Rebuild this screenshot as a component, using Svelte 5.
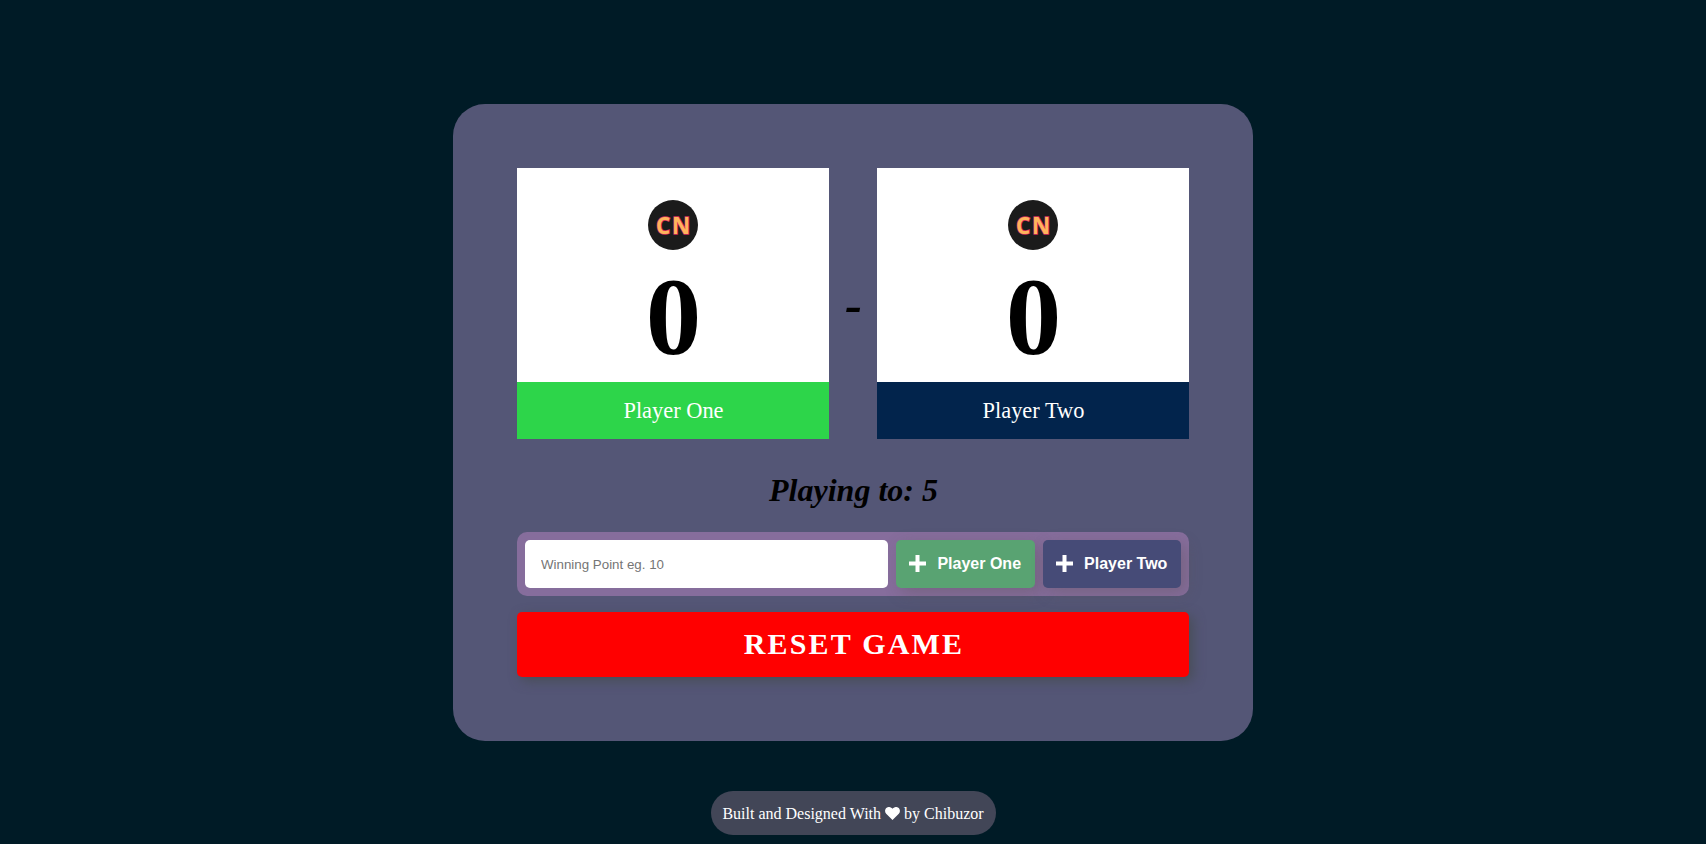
<script>
  let scores = $state([0, 0]);
  let target = $state(5);
  let entry = $state('');
  const players = [
    { name: 'Player One', tone: 'one' },
    { name: 'Player Two', tone: 'two' }
  ];
  function add(i) {
    if (Math.max(...scores) < target) scores[i] += 1;
  }
  function change() {
    const n = parseInt(entry, 10);
    if (n > 0) target = n;
  }
  function reset() {
    scores = [0, 0];
    entry = '';
    target = 5;
  }
</script>

{#snippet side(i)}
  <section class="player">
    <div class="board">
      <svg class="logo" viewBox="0 0 50 50" width="50" height="50">
        <circle cx="25" cy="25" r="25" fill="#1b1b1b" />
        <text x="26" y="33.500" text-anchor="middle">CN</text>
      </svg>
      <div class="score">{scores[i]}</div>
    </div>
    <div class="name {players[i].tone}">{players[i].name}</div>
  </section>
{/snippet}

<main>
  <div class="card">
    <div class="match">
      {@render side(0)}
      <div class="dash">-</div>
      {@render side(1)}
    </div>
    <h1>Playing to: {target}</h1>
    <div class="controls">
      <input placeholder="Winning Point eg. 10" bind:value={entry} onchange={change} />
      {#each players as p, i}
        <button class="add {p.tone}" onclick={() => add(i)}>
          <svg viewBox="0 0 17 17" width="17" height="17"><path d="M6.500 0h4v6.500H17v4h-6.500V17h-4v-6.500H0v-4h6.500z" fill="#fff" /></svg>
          <span>{p.name}</span>
        </button>
      {/each}
    </div>
    <button class="reset" onclick={reset}>RESET GAME</button>
  </div>
  <footer>
    <span>Built and Designed With</span>
    <svg viewBox="0 0 16 14" width="15" height="13"><path d="M8 14 1.200 7.200C-.6 5.300-.3 2.200 1.700.8 3.500-.5 6-.2 7.500 1.400L8 2l.5-.6C10-.2 12.500-.5 14.300.8c2 1.400 2.300 4.500.5 6.400z" fill="#fff" /></svg>
    <span>by Chibuzor</span>
  </footer>
</main>

<style>
  :global(body) {
    background: #001b26;
  }
  main {
    height: 844px;
    box-sizing: border-box;
    padding-top: 104px;
    display: flex;
    flex-direction: column;
    align-items: center;
    font-family: 'Liberation Serif', 'Times New Roman', serif;
    overflow: hidden;
  }
  .card {
    box-sizing: border-box;
    width: 800px;
    height: 636.500px;
    flex: none;
    padding: 64px;
    border-radius: 32px;
    background: #545676;
  }
  .match {
    display: grid;
    grid-template-columns: 312px 48px 312px;
    height: 271px;
  }
  .board {
    height: 214px;
    box-sizing: border-box;
    padding-top: 32px;
    background: #fff;
    display: flex;
    flex-direction: column;
    align-items: center;
  }
  .logo {
    flex: none;
  }
  .logo text {
    font: 700 22.500px 'Open Sans', sans-serif;
    letter-spacing: 1.800px;
    fill: #ffb45c;
    stroke: #d52a5c;
    stroke-width: 1.500px;
    paint-order: stroke;
  }
  .score {
    margin-top: 11px;
    padding-left: 1px;
    font-size: 111px;
    line-height: 112px;
    font-weight: 700;
  }
  .name {
    height: 57px;
    line-height: 57px;
    padding-left: 1px;
    text-align: center;
    font-size: 22.400px;
    color: #fff;
  }
  .name.one {
    background: #2dd54a;
  }
  .name.two {
    background: #02244c;
  }
  .dash {
    display: flex;
    align-items: center;
    justify-content: center;
    padding: 2px 0 0 1px;
    font-size: 51px;
    font-weight: 700;
    font-style: italic;
  }
  h1 {
    margin: 33px 0 23px;
    padding-left: 1px;
    height: 37px;
    line-height: 37px;
    text-align: center;
    font-size: 32px;
    font-style: italic;
  }
  .controls {
    box-sizing: border-box;
    height: 64px;
    padding: 8px;
    display: flex;
    gap: 8px;
    border-radius: 10px;
    background: #866d9c;
  }
  input {
    flex: 1;
    min-width: 0;
    box-sizing: border-box;
    border: 0;
    border-radius: 5px;
    padding: 0 16px;
    background: #fff;
    font: 13.333px 'Liberation Sans', Arial, sans-serif;
  }
  input::placeholder {
    color: #757575;
  }
  .add {
    width: 138.500px;
    border: 0;
    border-radius: 5px;
    padding: 0 0 1px;
    display: flex;
    align-items: center;
    justify-content: center;
    gap: 11px;
    color: #fff;
    font: 700 16px 'Liberation Sans', Arial, sans-serif;
    white-space: nowrap;
    box-shadow: 5px 5px 15px rgba(90, 80, 80, 0.35);
  }
  .add.one {
    background: #59a372;
  }
  .add.two {
    background: #464b77;
  }
  .reset {
    display: block;
    width: 100%;
    height: 65px;
    margin-top: 15.500px;
    padding: 0 0 1px 2px;
    border: 0;
    border-radius: 5px;
    background: #f00;
    color: #fff;
    font: 700 30px 'Liberation Serif', serif;
    letter-spacing: 2.200px;
    box-shadow: 4px 4px 12px rgba(70, 75, 80, 0.8);
  }
  footer {
    box-sizing: border-box;
    margin-top: 50.500px;
    width: 285px;
    height: 44px;
    flex: none;
    padding-top: 1px;
    border-radius: 22px;
    background: #424657;
    color: #fff;
    display: flex;
    align-items: center;
    justify-content: center;
    gap: 4px;
    font-size: 16px;
  }
</style>
